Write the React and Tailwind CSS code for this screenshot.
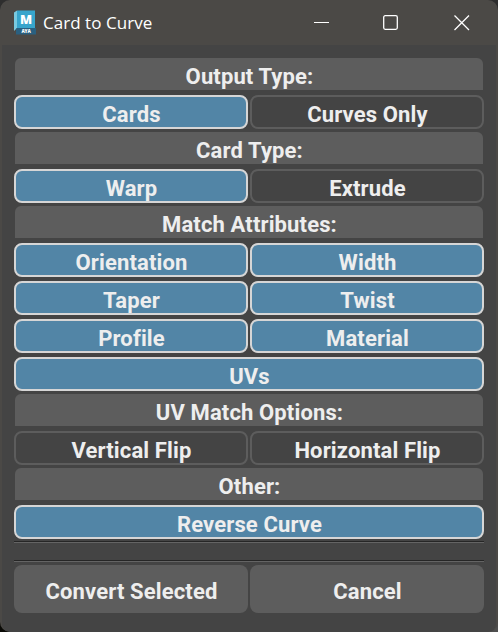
import React from "react";

const Header = ({ children }) => (
  <div className="mx-px mt-[3px] flex h-8 items-center justify-center rounded-t-[6px] bg-[#5d5d5d] pt-1.5 pl-px">
    {children}
  </div>
);

const Toggle = ({ on, children }) => (
  <button
    className={
      "flex h-[34px] min-w-0 flex-1 items-center justify-center rounded-[8px] border-2 pt-1.5 pl-px " +
      (on ? "border-[#d6d6d6] bg-[#5285a6]" : "border-[#5d5d5d] bg-[#444444]")
    }
  >
    {children}
  </button>
);

const Row = ({ first, children }) => (
  <div className={"flex gap-0.5 " + (first ? "mt-[5px]" : "mt-1")}>{children}</div>
);

const Separator = () => (
  <div className="h-0.5 border-t border-b border-t-[#262626] border-b-[#646464]" />
);

const Action = ({ children }) => (
  <button className="flex h-12 flex-1 items-center justify-center rounded-[8px] bg-[#5d5d5d] pt-1.5 pl-px">
    {children}
  </button>
);

const MayaIcon = () => (
  <svg className="ml-[13px] h-[26px] w-6" viewBox="0 0 24 26">
    <path d="M1 2.5L4 0.5V18L1 21Z" fill="#79c9df" />
    <path d="M4 0.5H22V18H4Z" fill="#37a5cc" />
    <path d="M4 18H23V24.5H3V19Z" fill="#2a6080" />
    <text x="13" y="13.6" textAnchor="middle" fontFamily="Open Sans, sans-serif" fontWeight="800" fontSize="12.5" letterSpacing="0" fill="#fff">M</text>
    <text x="13" y="23" textAnchor="middle" fontFamily="Open Sans, sans-serif" fontWeight="800" fontSize="4.6" letterSpacing="-0.2" fill="#fff">AYA</text>
  </svg>
);

export default function App() {
  return (
    <div className="h-[632px] w-[498px] overflow-hidden bg-[conic-gradient(#2e2e2e_25%,#4f4f4f_25%_50%,#0a0a06_50%_75%,#2e2e2e_75%)]">
      <div className="flex h-full flex-col overflow-hidden rounded-[10px] bg-[#4b4946] font-['Roboto',sans-serif] text-[22px] leading-none font-bold tracking-[0.13px] text-[#eeeeee]">
        <header className="flex h-[45px] shrink-0 items-center">
          <MayaIcon />
          <h1 className="ml-1.5 font-['Open_Sans','Noto_Sans',sans-serif] text-[17px] font-normal tracking-[0.04px] text-white">
            Card to Curve
          </h1>
          <svg className="ml-auto mr-[27px] h-4 w-40" viewBox="0 0 160 16" fill="none" stroke="#fff" strokeWidth="1.3">
            <path d="M3 7.5H18" strokeWidth="1" />
            <rect x="72.7" y="0.7" width="13.6" height="13.6" rx="1.5" />
            <path d="M143.5 0.5L158 15M158 0.5L143.5 15" />
          </svg>
        </header>
        <main className="mx-0.5 flex-1 rounded-b-[8px] bg-[#444444] px-3 pt-[10px]">
          <Header>Output Type:</Header>
          <Row first><Toggle on>Cards</Toggle><Toggle>Curves Only</Toggle></Row>
          <Header>Card Type:</Header>
          <Row first><Toggle on>Warp</Toggle><Toggle>Extrude</Toggle></Row>
          <Header>Match Attributes:</Header>
          <Row first><Toggle on>Orientation</Toggle><Toggle on>Width</Toggle></Row>
          <Row><Toggle on>Taper</Toggle><Toggle on>Twist</Toggle></Row>
          <Row><Toggle on>Profile</Toggle><Toggle on>Material</Toggle></Row>
          <Row><Toggle on>UVs</Toggle></Row>
          <Header>UV Match Options:</Header>
          <Row first><Toggle>Vertical Flip</Toggle><Toggle>Horizontal Flip</Toggle></Row>
          <Header>Other:</Header>
          <Row first><Toggle on>Reverse Curve</Toggle></Row>
          <div className="mt-0.5 mb-[3px] flex flex-col gap-[17px]">
            <Separator />
            <Separator />
          </div>
          <div className="flex gap-0.5"><Action>Convert Selected</Action><Action>Cancel</Action></div>
        </main>
      </div>
    </div>
  );
}
